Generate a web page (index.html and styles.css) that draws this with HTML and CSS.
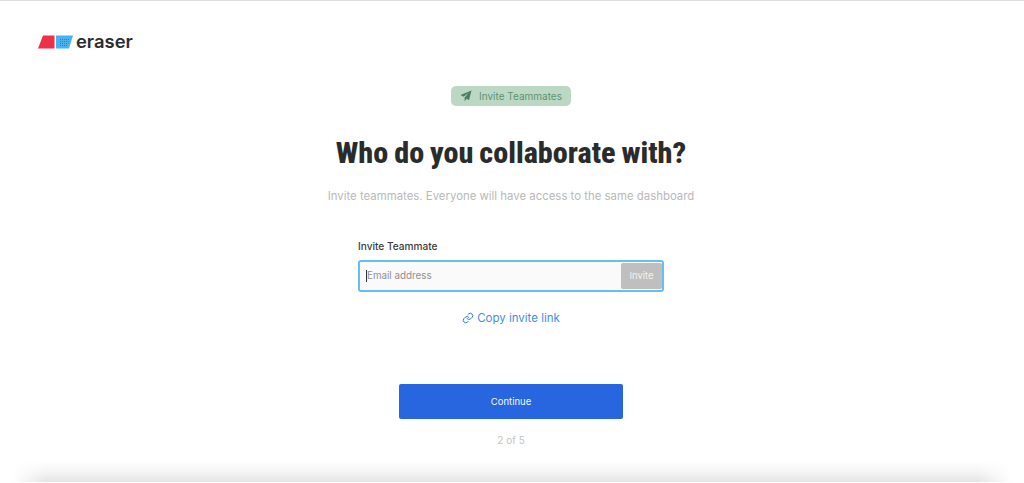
FILE: index.html
```html
<!DOCTYPE html>
<html lang="en">
<head>
    <meta charset="UTF-8">
    <meta name="viewport" content="width=device-width, initial-scale=1.0">
    <title>Eraser - Invite Teammates</title>
    <link rel="stylesheet" href="styles.css">
</head>
<body>
    <header class="topbar">
        <svg class="logo-mark" width="36" height="14" viewBox="0 0 36 14">
            <defs>
                <pattern id="dots" width="2" height="2" patternUnits="userSpaceOnUse">
                    <rect width="1" height="1" fill="#2f7fd0"></rect>
                </pattern>
            </defs>
            <path d="M5 0.5H16.5V13.5H0Z" fill="#ee3148"></path>
            <path d="M18 0.5H35L31 13.5H18Z" fill="#4bb2f2"></path>
            <path d="M21 3H32L29.5 11H21Z" fill="url(#dots)"></path>
        </svg>
        <span class="logo-text">eraser</span>
    </header>

    <main class="content">
        <div class="badge">
            <svg width="12" height="12" viewBox="0 0 12 12">
                <path d="M11.5 0.5L0.5 5L3.5 6.8L9 2.5L4.6 7.6V11.2L6.6 8.8L9 10.2Z" fill="#4a7f5f"></path>
            </svg>
            <span>Invite Teammates</span>
        </div>

        <h1>Who do you collaborate with?</h1>
        <p class="subtitle">Invite teammates. Everyone will have access to the same dashboard</p>

        <div class="invite-form">
            <label for="email">Invite Teammate</label>
            <div class="input-box">
                <span class="caret"></span>
                <input type="text" id="email" placeholder="Email address">
                <button class="invite-btn">Invite</button>
            </div>
        </div>

        <a class="copy-link" href="#">
            <svg width="12" height="12" viewBox="0 0 24 24" fill="none" stroke="#2f80dc" stroke-width="2" stroke-linecap="round" stroke-linejoin="round">
                <path d="M10 13a5 5 0 0 0 7.5.5l3-3a5 5 0 0 0-7-7l-1.7 1.7"></path>
                <path d="M14 11a5 5 0 0 0-7.5-.5l-3 3a5 5 0 0 0 7 7l1.7-1.7"></path>
            </svg>
            <span>Copy invite link</span>
        </a>

        <button class="continue-btn">Continue</button>
        <div class="steps">2 of 5</div>
    </main>

    <div class="sheet"></div>
</body>
</html>
```

FILE: styles.css
```css
body {
    margin: 0;
    height: 483px;
    overflow: hidden;
    background: #fff;
    border-top: 1px solid #dcdcdc;
    box-sizing: border-box;
    font-family: Inter, "Liberation Sans", sans-serif;
}
.topbar {
    display: flex;
    align-items: center;
    gap: 2px;
    height: 30px;
    padding: 26px 0 0 38px;
}
.logo-text {
    font-size: 18.4px;
    font-weight: 600;
    color: #2b2d2f;
    line-height: 28px;
    margin-bottom: 2px;
}
.content {
    display: flex;
    flex-direction: column;
    align-items: center;
    padding-right: 2px;
    margin-top: 29px;
}
.badge {
    display: flex;
    align-items: center;
    gap: 7px;
    height: 20px;
    padding: 0 9px;
    background: #bcd8c4;
    border-radius: 5px;
    font-size: 10px;
    color: #5c9273;
}
h1 {
    margin: 26px 0 0;
    font-family: Roboto, "Open Sans", sans-serif;
    font-stretch: 75%;
    font-size: 30.2px;
    word-spacing: -1px;
    line-height: 42px;
    font-weight: 800;
    color: #2a2c2b;
}
.subtitle {
    margin: 13px 0 0;
    font-size: 11.4px;
    line-height: 18px;
    color: #b9b9b9;
}
.invite-form {
    margin-top: 34px;
    width: 306px;
}
.invite-form label {
    display: block;
    font-size: 10.1px;
    font-weight: 500;
    line-height: 14px;
    color: #3a3a3a;
    margin-bottom: 6.5px;
}
.input-box {
    display: flex;
    align-items: center;
    box-sizing: border-box;
    height: 32px;
    padding: 0 0 0 6px;
    background: #fafafa;
    border: 2px solid #6bbdf0;
    border-radius: 3px;
}
.caret {
    width: 1px;
    height: 12px;
    background: #333;
}
.input-box input {
    flex: 1;
    min-width: 0;
    border: none;
    outline: none;
    background: transparent;
    padding: 0;
    font-family: inherit;
    font-size: 9.8px;
    color: #333;
}
.input-box input::placeholder {
    color: #8f8f8f;
}
.invite-btn {
    width: 41px;
    height: 26px;
    padding: 0;
    border: none;
    border-radius: 2px;
    background: #bfbfbf;
    color: #f2f2f2;
    font-family: inherit;
    font-size: 9.5px;
}
.copy-link {
    display: flex;
    align-items: center;
    gap: 3px;
    margin-top: 18px;
    font-size: 11.5px;
    line-height: 16px;
    color: #3f8fe6;
    text-decoration: none;
}
.continue-btn {
    width: 224px;
    height: 35px;
    margin-top: 58px;
    padding: 0;
    border: none;
    border-radius: 2px;
    background: #2766de;
    color: #f4f7ff;
    font-family: inherit;
    font-size: 9.5px;
}
.steps {
    margin-top: 14px;
    font-size: 10px;
    line-height: 14px;
    color: #c4c4c4;
}
/* soft shadow of the next panel, fades up and towards both sides */
.sheet {
    height: 21px;
    margin: 14px 12px 0;
    background: linear-gradient(to bottom, rgba(228, 228, 228, 0), rgba(228, 228, 228, 0.35) 50%, #e4e4e4);
    -webkit-mask-image: linear-gradient(to right, transparent, #000 34px, #000 calc(100% - 34px), transparent);
    mask-image: linear-gradient(to right, transparent, #000 34px, #000 calc(100% - 34px), transparent);
}
```
